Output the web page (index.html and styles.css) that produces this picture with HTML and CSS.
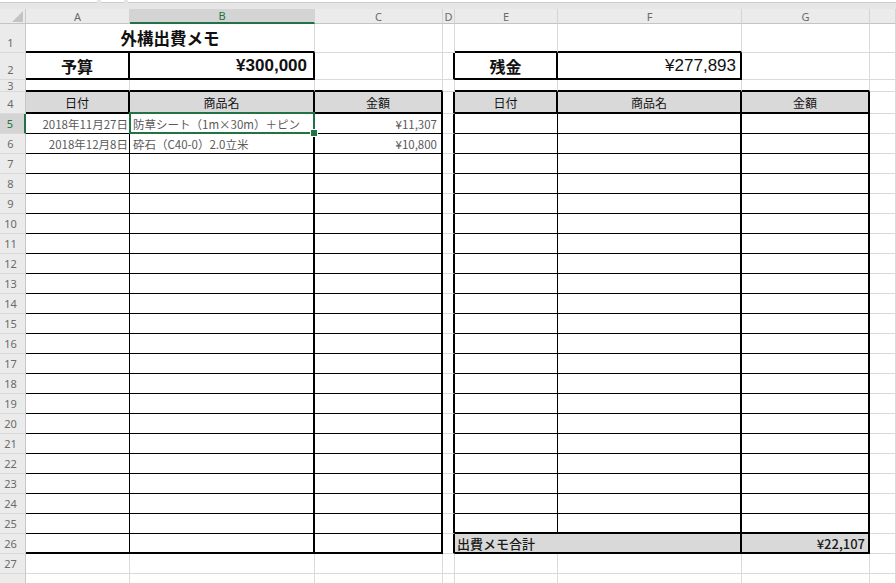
FILE: index.html
```html
<!DOCTYPE html>
<html lang="ja">
<head>
<meta charset="utf-8">
<title>外構出費メモ</title>
<link rel="stylesheet" href="styles.css">
</head>
<body>
<div class="topbar"><span class="fb fb1"></span><span class="fb fb2"></span><span class="fb fb3"></span></div>
<div class="sheet">
  <!-- column headers -->
  <div class="corner"><svg width="25" height="14" viewBox="0 0 25 14"><polygon points="23,2 23,13 12,13" fill="#c3c3c3"/></svg></div>
  <div class="ch">A</div><div class="ch sel">B</div><div class="ch">C</div><div class="ch">D</div><div class="ch">E</div><div class="ch">F</div><div class="ch">G</div><div class="ch"></div>

  <!-- row 1 -->
  <div class="rh">1</div>
  <div class="c e title span2">外構出費メモ</div>
  <div class="c"></div><div class="c"></div><div class="c e"></div><div class="c e"></div><div class="c"></div><div class="c"></div>

  <!-- row 2 -->
  <div class="rh">2</div>
  <div class="c k e big">予算</div>
  <div class="c k e amt amt-b">¥300,000</div>
  <div class="c"></div>
  <div class="c k"></div>
  <div class="c k e big">残金</div>
  <div class="c k e amt amt-f">¥277,893</div>
  <div class="c"></div><div class="c"></div>

  <!-- row 3 -->
  <div class="rh short">3</div>
  <div class="c e"></div><div class="c e"></div><div class="c e"></div><div class="c"></div><div class="c e"></div><div class="c e"></div><div class="c e"></div><div class="c"></div>

  <!-- row 4 -->
  <div class="rh">4</div>
  <div class="c k e h">日付</div><div class="c k e h">商品名</div><div class="c k e h">金額</div>
  <div class="c k"></div>
  <div class="c k e h">日付</div><div class="c k e h">商品名</div><div class="c k e h">金額</div>
  <div class="c"></div>

  <!-- row 5 -->
  <div class="rh sel">5</div>
  <div class="c t d date">2018年11月27日</div><div class="c t k d item cur">防草シート（1m×30m）＋ピン</div><div class="c t k d price">¥11,307</div>
  <div class="c k"></div>
  <div class="c t"></div><div class="c t k"></div><div class="c t k"></div><div class="c"></div>

  <!-- row 6 -->
  <div class="rh">6</div>
  <div class="c t d date">2018年12月8日</div><div class="c t k d item">砕石（C40-0）2.0立米</div><div class="c t k d price">¥10,800</div>
  <div class="c k"></div>
  <div class="c t"></div><div class="c t k"></div><div class="c t k"></div><div class="c"></div>

  <div class="rh">7</div><div class="c t"></div><div class="c t k"></div><div class="c t k"></div><div class="c k"></div><div class="c t"></div><div class="c t k"></div><div class="c t k"></div><div class="c"></div>
  <div class="rh">8</div><div class="c t"></div><div class="c t k"></div><div class="c t k"></div><div class="c k"></div><div class="c t"></div><div class="c t k"></div><div class="c t k"></div><div class="c"></div>
  <div class="rh">9</div><div class="c t"></div><div class="c t k"></div><div class="c t k"></div><div class="c k"></div><div class="c t"></div><div class="c t k"></div><div class="c t k"></div><div class="c"></div>
  <div class="rh">10</div><div class="c t"></div><div class="c t k"></div><div class="c t k"></div><div class="c k"></div><div class="c t"></div><div class="c t k"></div><div class="c t k"></div><div class="c"></div>
  <div class="rh">11</div><div class="c t"></div><div class="c t k"></div><div class="c t k"></div><div class="c k"></div><div class="c t"></div><div class="c t k"></div><div class="c t k"></div><div class="c"></div>
  <div class="rh">12</div><div class="c t"></div><div class="c t k"></div><div class="c t k"></div><div class="c k"></div><div class="c t"></div><div class="c t k"></div><div class="c t k"></div><div class="c"></div>
  <div class="rh">13</div><div class="c t"></div><div class="c t k"></div><div class="c t k"></div><div class="c k"></div><div class="c t"></div><div class="c t k"></div><div class="c t k"></div><div class="c"></div>
  <div class="rh">14</div><div class="c t"></div><div class="c t k"></div><div class="c t k"></div><div class="c k"></div><div class="c t"></div><div class="c t k"></div><div class="c t k"></div><div class="c"></div>
  <div class="rh">15</div><div class="c t"></div><div class="c t k"></div><div class="c t k"></div><div class="c k"></div><div class="c t"></div><div class="c t k"></div><div class="c t k"></div><div class="c"></div>
  <div class="rh">16</div><div class="c t"></div><div class="c t k"></div><div class="c t k"></div><div class="c k"></div><div class="c t"></div><div class="c t k"></div><div class="c t k"></div><div class="c"></div>
  <div class="rh">17</div><div class="c t"></div><div class="c t k"></div><div class="c t k"></div><div class="c k"></div><div class="c t"></div><div class="c t k"></div><div class="c t k"></div><div class="c"></div>
  <div class="rh">18</div><div class="c t"></div><div class="c t k"></div><div class="c t k"></div><div class="c k"></div><div class="c t"></div><div class="c t k"></div><div class="c t k"></div><div class="c"></div>
  <div class="rh">19</div><div class="c t"></div><div class="c t k"></div><div class="c t k"></div><div class="c k"></div><div class="c t"></div><div class="c t k"></div><div class="c t k"></div><div class="c"></div>
  <div class="rh">20</div><div class="c t"></div><div class="c t k"></div><div class="c t k"></div><div class="c k"></div><div class="c t"></div><div class="c t k"></div><div class="c t k"></div><div class="c"></div>
  <div class="rh">21</div><div class="c t"></div><div class="c t k"></div><div class="c t k"></div><div class="c k"></div><div class="c t"></div><div class="c t k"></div><div class="c t k"></div><div class="c"></div>
  <div class="rh">22</div><div class="c t"></div><div class="c t k"></div><div class="c t k"></div><div class="c k"></div><div class="c t"></div><div class="c t k"></div><div class="c t k"></div><div class="c"></div>
  <div class="rh">23</div><div class="c t"></div><div class="c t k"></div><div class="c t k"></div><div class="c k"></div><div class="c t"></div><div class="c t k"></div><div class="c t k"></div><div class="c"></div>
  <div class="rh">24</div><div class="c t"></div><div class="c t k"></div><div class="c t k"></div><div class="c k"></div><div class="c t"></div><div class="c t k"></div><div class="c t k"></div><div class="c"></div>
  <div class="rh">25</div><div class="c t"></div><div class="c t k"></div><div class="c t k"></div><div class="c k"></div><div class="c t e"></div><div class="c t k e"></div><div class="c t k e"></div><div class="c"></div>

  <!-- row 26 -->
  <div class="rh">26</div>
  <div class="c t e"></div><div class="c t k e"></div><div class="c t k e"></div>
  <div class="c k"></div>
  <div class="c k e tot span2">出費メモ合計</div>
  <div class="c k e tot totamt">¥22,107</div>
  <div class="c"></div>

  <div class="rh">27</div><div class="c"></div><div class="c"></div><div class="c"></div><div class="c"></div><div class="c"></div><div class="c"></div><div class="c"></div><div class="c"></div>
  <div class="rh"></div><div class="c"></div><div class="c"></div><div class="c"></div><div class="c"></div><div class="c"></div><div class="c"></div><div class="c"></div><div class="c"></div>
</div>
</body>
</html>
```

FILE: styles.css
```css
* { box-sizing: border-box; margin: 0; padding: 0; }
html, body { background: #fff; }
body {
  width: 896px;
  height: 583px;
  overflow: hidden;
  font-family: "Noto Sans CJK JP", "Noto Sans", sans-serif;
}

.topbar {
  height: 9px;
  background: #e6e6e6;
  display: flex;
  gap: 4px;
  align-items: flex-start;
}
.fb { height: 3px; background: #fff; border-bottom: 1px solid #cdcdcd; }
.fb1 { width: 97px; }
.fb2 { width: 23px; }
.fb3 { flex: 1; }

.sheet {
  display: grid;
  grid-template-columns: 26px 104px 185px 128px 12px 103px 184px 128px 1fr;
  grid-template-rows: 15px 29px 27px 12px 22px repeat(24, 20px);
}

.corner {
  background: #ebebeb;
  border-right: 1px solid #c8c8c8;
  border-bottom: 1px solid #c4c4c4;
}
.corner svg { display: block; }

.ch {
  background: #ebebeb;
  border-right: 1px solid #d4d4d4;
  border-bottom: 1px solid #c4c4c4;
  font: 11px "Noto Sans", sans-serif;
  color: #6a6a6a;
  display: flex;
  align-items: center;
  justify-content: center;
  line-height: 1;
}
.ch.sel {
  background: #d4d4d4;
  color: #217346;
  border-bottom: 2px solid #217346;
}

.rh {
  background: #ebebeb;
  border-right: 1px solid #c8c8c8;
  border-bottom: 1px solid #d9d9d9;
  color: #6a6a6a;
  font: 11px/18px "Noto Sans", sans-serif;
  display: flex;
  align-items: flex-end;
  justify-content: center;
  padding-right: 4px;
  overflow: hidden;
}
.rh.short {
  font-size: 10.5px;
  line-height: 10px;
  align-items: center;
  overflow: visible;
}
.rh.sel {
  background: #d4d4d4;
  color: #217346;
  border-right: 2px solid #217346;
}

/* cells */
.c {
  border-right: 1px solid #dadada;
  border-bottom: 1px solid #dadada;
  display: flex;
  align-items: center;
  min-width: 0;
  white-space: nowrap;
  overflow: hidden;
}
.t { border-right: 1px solid #000; border-bottom: 1px solid #000; }
.k { border-right: 2px solid #000; }
.e { border-bottom: 2px solid #000; }
.span2 { grid-column: span 2; }

.title {
  justify-content: center;
  font-size: 16.5px;
  font-weight: 700;
  color: #111;
}
.big {
  justify-content: center;
  font-size: 16px;
  font-weight: 700;
  color: #111;
}
.amt {
  justify-content: flex-end;
  font-family: "Liberation Sans", "Noto Sans CJK JP", sans-serif;
  font-size: 17px;
  color: #111;
}
.amt-b { font-weight: 700; padding-right: 6px; }
.amt-f { font-weight: 400; padding-right: 4px; }

.h {
  background: #d9d9d9;
  justify-content: center;
  font-size: 12px;
  color: #111;
}

.d { font-size: 11.5px; color: #5a5a5a; }
.date { justify-content: flex-end; padding-right: 1px; }
.item { padding-left: 3px; }
.price { justify-content: flex-end; padding-right: 4px; }

.cur { position: relative; overflow: visible; }
.cur::after {
  content: "";
  position: absolute;
  left: -1px;
  top: -2px;
  right: -2px;
  bottom: -1px;
  border: 2px solid #217346;
  z-index: 2;
}
.cur::before {
  content: "";
  position: absolute;
  right: -5px;
  bottom: -4px;
  width: 6px;
  height: 6px;
  background: #217346;
  border: 1px solid #fff;
  z-index: 3;
}

.tot {
  background: #d9d9d9;
  font-size: 13px;
  font-weight: 500;
  color: #1a1a1a;
  padding-left: 2px;
}
.totamt { justify-content: flex-end; padding-right: 3px; }
```
